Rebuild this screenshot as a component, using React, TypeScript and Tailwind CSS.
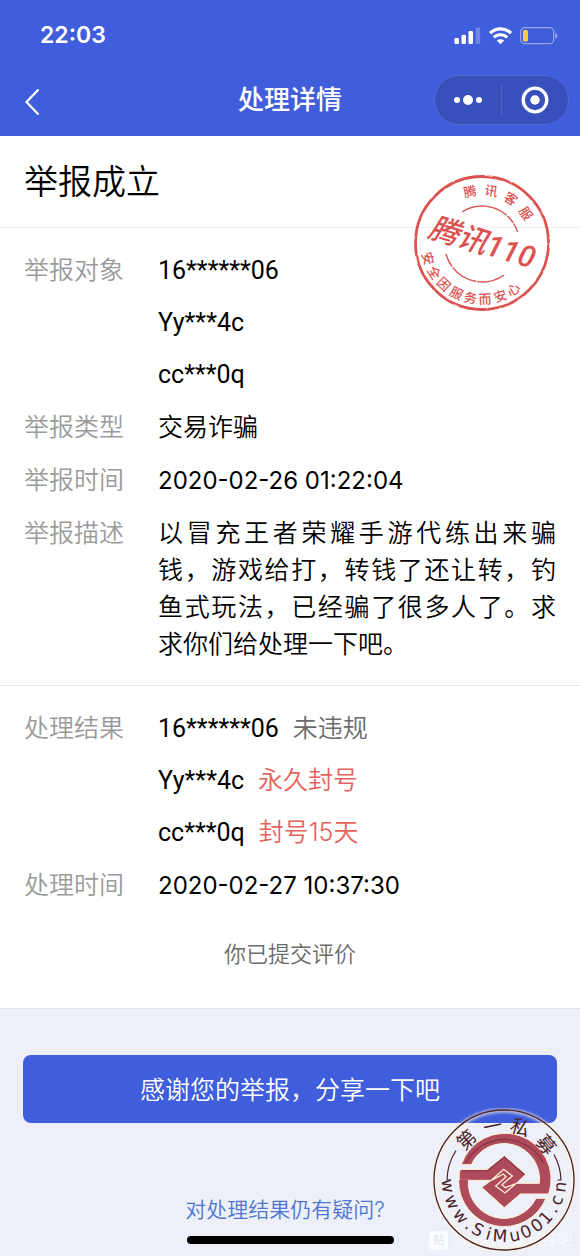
import React from "react";

interface Account {
  id: string;
  verdict?: string;
  punished?: boolean;
}

interface Glyph {
  char: string;
  angle: number;
}

const reported: Account[] = [
  { id: "16******06" },
  { id: "Yy***4c" },
  { id: "cc***0q" },
];

const results: Account[] = [
  { id: "16******06", verdict: "未违规" },
  { id: "Yy***4c", verdict: "永久封号", punished: true },
  { id: "cc***0q", verdict: "封号15天", punished: true },
];

const stampTop: Glyph[] = [
  { char: "腾", angle: -13 },
  { char: "讯", angle: 10 },
  { char: "客", angle: 33 },
  { char: "服", angle: 56 },
];

const stampBottom: Glyph[] = [
  { char: "安", angle: 74 },
  { char: "全", angle: 58 },
  { char: "因", angle: 43 },
  { char: "服", angle: 27 },
  { char: "务", angle: 12 },
  { char: "而", angle: -3 },
  { char: "安", angle: -19 },
  { char: "心", angle: -34 },
];

const logoTop: Glyph[] = [
  { char: "第", angle: -43 },
  { char: "一", angle: -12 },
  { char: "私", angle: 17 },
  { char: "募", angle: 50 },
];

const logoBottom: Glyph[] = [
  { char: "w", angle: 84 },
  { char: "w", angle: 67 },
  { char: "w", angle: 50 },
  { char: ".", angle: 38 },
  { char: "S", angle: 28 },
  { char: "i", angle: 16 },
  { char: "M", angle: 4 },
  { char: "u", angle: -11 },
  { char: "0", angle: -23 },
  { char: "0", angle: -36 },
  { char: "1", angle: -48 },
  { char: ".", angle: -59 },
  { char: "c", angle: -69 },
  { char: "n", angle: -83 },
];

// Letters set around a circle centred on 0,0. y is the baseline offset.
const Ring = ({ glyphs, y }: { glyphs: Glyph[]; y: number }) => (
  <>
    {glyphs.map(({ char, angle }, i) => (
      <text key={i} y={y} textAnchor="middle" transform={`rotate(${angle})`}>
        {char}
      </text>
    ))}
  </>
);

const StatusIcons = () => (
  <svg width="104" height="18" viewBox="0 0 104 18" fill="none" aria-hidden="true">
    <rect x="0.5" y="11" width="4.5" height="6" rx="1.2" fill="#fff" />
    <rect x="7.5" y="7.7" width="4.5" height="9.3" rx="1.2" fill="#fff" />
    <rect x="14.5" y="4" width="4.5" height="13" rx="1.2" fill="#fff" />
    <rect x="21.7" y="0.5" width="4.5" height="16.5" rx="1.2" fill="#fff" opacity="0.25" />
    <path d="M36 6.2a15 15 0 0 1 21 0" stroke="#fff" strokeWidth="3.2" />
    <path d="M39.8 10.4a9.6 9.6 0 0 1 13.4 0" stroke="#fff" strokeWidth="3" />
    <path d="M42.8 13.6a5.4 5.4 0 0 1 7.4 0L46.5 17.2z" fill="#fff" />
    <rect x="66.7" y="0.7" width="33" height="16" rx="4" stroke="#fff" strokeWidth="1.2" opacity="0.45" />
    <rect x="69" y="3" width="5" height="11.5" rx="1.6" fill="#f7cb46" />
    <path d="M101.2 5.8q2.4 1 2.4 2.9t-2.4 2.9z" fill="#fff" opacity="0.45" />
  </svg>
);

const Stamp = () => (
  <svg
    className="absolute right-[28px] top-[37px]"
    width="140"
    height="140"
    viewBox="-70 -70 140 140"
    fill="none"
    role="img"
    aria-label="腾讯110"
  >
    <g stroke="#dc5250">
      <circle r="66.5" strokeWidth="2.8" />
      <circle r="67.6" strokeWidth="0.8" stroke="#fff" strokeDasharray="5 23 2 31 8 17 3 41" />
      <circle r="65.2" strokeWidth="0.8" stroke="#fff" strokeDasharray="2 37 6 29 3 19" />
      <path d="M-20-31A37 37 0 0 1 35.500-11" strokeWidth="1.400" strokeDasharray="48 1 9 1 20" />
      <path d="M-36 11A37.500 37.500 0 0 0 22 32" strokeWidth="1.400" strokeDasharray="14 1 28 1 40" />
    </g>
    <g className="fill-[#dc5250] font-['Noto_Sans_CJK_SC',sans-serif] text-[13px] font-medium">
      <Ring glyphs={stampTop} y={-48} />
      <Ring glyphs={stampBottom} y={61} />
    </g>
    <text
      x="0"
      y="10"
      textAnchor="middle"
      transform="rotate(17)"
      className="fill-[#dc5250] font-[Roboto,'Noto_Sans_CJK_SC',sans-serif] text-[30px] font-medium italic"
    >
      腾讯110
    </text>
  </svg>
);

const SiteLogo = () => (
  <svg
    className="absolute bottom-[4px] right-[4px]"
    width="144"
    height="144"
    viewBox="-72 -72 144 144"
    fill="none"
    role="img"
    aria-label="第一私募 www.SiMu001.cn"
  >
    <defs>
      <filter id="glow" x="-20%" y="-20%" width="140%" height="140%">
        <feGaussianBlur stdDeviation="1.6" />
      </filter>
    </defs>
    <circle r="69.500" stroke="#fff5dc" strokeWidth="4" opacity="0.7" filter="url(#glow)" />
    <circle r="70" stroke="#4c2226" strokeWidth="1.300" />
    <g stroke="#4c2226" strokeWidth="1.200">
      <path d="M-53.500 0H-57A56.500 56.500 0 0 1-48-29.500" />
      <path d="M53.500 0H57A56.500 56.500 0 0 0 50-25.500" />
    </g>
    <g transform="scale(0.33333) translate(-146 -150)" stroke="#fff0cf" strokeWidth="3" strokeLinejoin="miter">
      <path
        d="M18 104A136 136 0 0 1 280 192H195L147 233 79 172 108 151H12Q10 135 14 119H95L147 77 211 133 183 160H252A107 107 0 0 0 48 104Z"
        fill="#ad4a5c"
      />
      <path d="M272 205A136 136 0 0 1 10 151H39A107 107 0 0 0 242 205Z" fill="#ad4a5c" />
      <path d="M12 149H38V154H12Z" fill="#ad4a5c" stroke="none" />
      <path
        d="M108 151L145 118 171 138 140 164 150 173 183 160 149 189 121 168 152 141 144 132Z"
        fill="#ad4a5c"
        strokeWidth="4"
      />
      <path
        d="M18 122H96L147 81L206 133M30 101A132 132 0 0 1 264 98"
        stroke="#702c37"
        strokeWidth="4"
        opacity="0.6"
      />
    </g>
    <g className="fill-[#4c2226] font-['Noto_Sans_CJK_SC',sans-serif] text-[19px] font-normal">
      <Ring glyphs={logoTop} y={-48} />
    </g>
    <g className="fill-[#4c2226] font-['DejaVu_Sans',sans-serif] text-[17px] font-normal">
      <Ring glyphs={logoBottom} y={62} />
    </g>
  </svg>
);

const Row = ({ label, children }: { label: string; children: React.ReactNode }) => (
  <div className="flex">
    <dt className="w-[134px] shrink-0 text-[#9b9b9b]">{label}</dt>
    <dd className="min-w-0 flex-1">{children}</dd>
  </div>
);

const DateTime = ({ value }: { value: string }) => (
  <time className="block text-2xl leading-[37px] font-normal">{value}</time>
);

const AccountList = ({ accounts }: { accounts: Account[] }) => (
  <ul className="flex flex-col gap-[15px]">
    {accounts.map(({ id, verdict, punished }) => (
      <li key={id} className="flex gap-[14px]">
        <span className="font-[Roboto,sans-serif] font-normal">{id}</span>
        {verdict && (
          <span className={punished ? "text-[#e5625c]" : "text-[#6b6b6b]"}>{verdict}</span>
        )}
      </li>
    ))}
  </ul>
);

const App = () => {
  return (
    <div
      lang="zh-CN"
      className="relative flex min-h-screen flex-col overflow-hidden bg-[#edf0f8] font-[Inter,'Noto_Sans_CJK_SC',sans-serif] font-[350] text-black"
    >
      <header className="bg-[#405ddb] text-white">
        <div className="flex h-[71px] items-center justify-between pl-10 pr-[22px]">
          <time className="text-[23px] font-semibold">22:03</time>
          <StatusIcons />
        </div>
        <div className="grid h-[65px] grid-cols-[1fr_auto_1fr] items-center px-[11px] pb-2">
          <button type="button" aria-label="返回" className="ml-[13px] w-4 pt-1">
            <svg width="16" height="28" viewBox="0 0 16 28" fill="none" stroke="currentColor" strokeWidth="2.2">
              <path d="M14.500 1.500L2.500 14l12 12.500" />
            </svg>
          </button>
          <h1 className="text-[26px] font-medium leading-9">处理详情</h1>
          <div className="flex h-[50px] w-[135px] items-center justify-self-end rounded-full border border-[#5169cf] bg-[#3850bb]">
            <button type="button" aria-label="更多" className="flex flex-1 items-center justify-center gap-[3px]">
              <span className="size-[6px] rounded-full bg-white" />
              <span className="size-[10px] rounded-full bg-white" />
              <span className="size-[6px] rounded-full bg-white" />
            </button>
            <span className="h-8 w-px bg-[#5065c2]" />
            <button type="button" aria-label="关闭" className="flex flex-1 justify-center">
              <svg width="28" height="28" viewBox="0 0 28 28" fill="none">
                <circle cx="14" cy="14" r="11.800" stroke="#fff" strokeWidth="3.300" />
                <circle cx="14" cy="14" r="4.700" fill="#fff" />
              </svg>
            </button>
          </div>
        </div>
      </header>

      <main className="relative border-b border-[#e2e3e8] bg-white text-[25px] leading-[37px]">
        <h2 className="border-b border-[#e9ecf0] px-6 py-5 text-[34px] leading-[51px]">举报成立</h2>

        <dl className="flex flex-col gap-4 border-b border-[#e8e8e8] px-6 pb-[22px] pt-6">
          <Row label="举报对象">
            <AccountList accounts={reported} />
          </Row>
          <Row label="举报类型">交易诈骗</Row>
          <Row label="举报时间">
            <DateTime value="2020-02-26 01:22:04" />
          </Row>
          <Row label="举报描述">
            <p className="text-justify">
              以冒充王者荣耀手游代练出来骗钱，游戏给打，转钱了还让转，钓鱼式玩法，已经骗了很多人了。求求你们给处理一下吧。
            </p>
          </Row>
        </dl>

        <dl className="flex flex-col gap-4 px-6 pt-6">
          <Row label="处理结果">
            <AccountList accounts={results} />
          </Row>
          <Row label="处理时间">
            <DateTime value="2020-02-27 10:37:30" />
          </Row>
        </dl>
        <p className="pb-[37px] pt-[34px] text-center text-[22px] leading-[33px] text-[#6b6b6b]">
          你已提交评价
        </p>

        <Stamp />
      </main>

      <footer className="flex flex-1 flex-col px-[23px] pb-3 pt-[46px]">
        <button type="button" className="h-[68px] rounded-lg bg-[#405ddb] pt-1 text-[25px] text-white">
          感谢您的举报，分享一下吧
        </button>
        <a href="#appeal" className="mt-[71px] self-center pr-[10px] text-[21px] leading-8 text-[#4c76d2]">
          对处理结果仍有疑问?
        </a>
        <div className="mt-[10px] h-2 w-[207px] self-center rounded-full bg-black" />
      </footer>

      <div className="absolute bottom-1 right-2 flex items-center gap-1 text-[15px] leading-6 text-white/70">
        <span className="flex size-[19px] items-center justify-center rounded bg-white/80 text-[11px] text-[#dfe4f0]">
          贴
        </span>
        @王者荣耀代练吧
      </div>
      <SiteLogo />
    </div>
  );
};

export default App;
